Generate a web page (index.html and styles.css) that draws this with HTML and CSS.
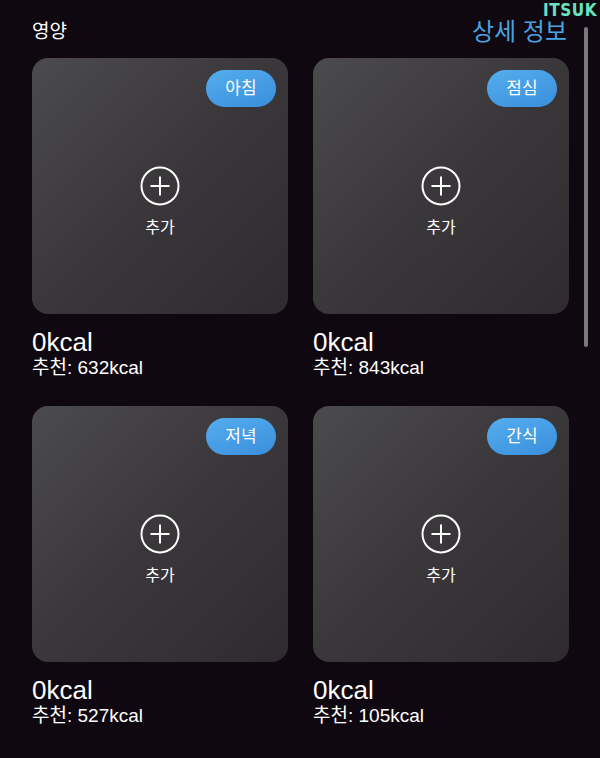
FILE: index.html
```html
<!DOCTYPE html>
<html>
<head>
<meta charset="utf-8">
<title>영양</title>
<link rel="stylesheet" href="styles.css">
</head>
<body>
	<div class="watermark">ITSUK</div>
	<div class="scrollbar"></div>
	<div class="page">
		<div class="header">
			<h2 class="title">영양</h2>
			<a class="detail">상세 정보</a>
		</div>
		<div class="meals">
			<div class="meal">
				<div class="card">
					<span class="pill">아침</span>
					<svg class="plus" width="40" height="40" viewBox="0 0 40 40">
						<circle cx="20" cy="20" r="18.5" fill="none" stroke="#fff" stroke-width="2"/>
						<path d="M20 10.5v19M10.5 20h19" stroke="#fff" stroke-width="2"/>
					</svg>
					<span class="add">추가</span>
				</div>
				<div class="kcal">0kcal</div>
				<div class="goal">추천: 632kcal</div>
			</div>
			<div class="meal">
				<div class="card">
					<span class="pill">점심</span>
					<svg class="plus" width="40" height="40" viewBox="0 0 40 40">
						<circle cx="20" cy="20" r="18.5" fill="none" stroke="#fff" stroke-width="2"/>
						<path d="M20 10.5v19M10.5 20h19" stroke="#fff" stroke-width="2"/>
					</svg>
					<span class="add">추가</span>
				</div>
				<div class="kcal">0kcal</div>
				<div class="goal">추천: 843kcal</div>
			</div>
			<div class="meal">
				<div class="card">
					<span class="pill">저녁</span>
					<svg class="plus" width="40" height="40" viewBox="0 0 40 40">
						<circle cx="20" cy="20" r="18.5" fill="none" stroke="#fff" stroke-width="2"/>
						<path d="M20 10.5v19M10.5 20h19" stroke="#fff" stroke-width="2"/>
					</svg>
					<span class="add">추가</span>
				</div>
				<div class="kcal">0kcal</div>
				<div class="goal">추천: 527kcal</div>
			</div>
			<div class="meal">
				<div class="card">
					<span class="pill">간식</span>
					<svg class="plus" width="40" height="40" viewBox="0 0 40 40">
						<circle cx="20" cy="20" r="18.5" fill="none" stroke="#fff" stroke-width="2"/>
						<path d="M20 10.5v19M10.5 20h19" stroke="#fff" stroke-width="2"/>
					</svg>
					<span class="add">추가</span>
				</div>
				<div class="kcal">0kcal</div>
				<div class="goal">추천: 105kcal</div>
			</div>
		</div>
	</div>
</body>
</html>
```
FILE: styles.css
```css
body {
	margin: 0;
	background: #100810;
	color: #fff;
	font-family: "Liberation Sans", "Noto Sans CJK KR", sans-serif;
}

.page {
	padding: 0 31px 0 32px;
}

.header {
	height: 58px;
	display: flex;
	align-items: center;
	justify-content: space-between;
}

.title {
	margin: 0;
	font-size: 19px;
	font-weight: normal;
}

.detail {
	margin-right: 2px;
	font-size: 24px;
	color: #48a3e2;
}

.meals {
	display: grid;
	grid-template-columns: 256px 256px;
	column-gap: 25px;
	row-gap: 27px;
}

.card {
	position: relative;
	height: 256px;
	border-radius: 16px;
	background: linear-gradient(135deg, #4b4a4c 0%, #3a373a 50%, #2f2a2f 100%);
	display: flex;
	flex-direction: column;
	align-items: center;
	padding-top: 108px;
	box-sizing: border-box;
}

.pill {
	position: absolute;
	top: 12px;
	right: 12px;
	width: 70px;
	height: 37px;
	line-height: 37px;
	border-radius: 19px;
	text-align: center;
	font-size: 17px;
	background: linear-gradient(160deg, #55aeee, #3a8edc);
}

.plus {
	display: block;
}

.add {
	margin-top: 12px;
	font-size: 16px;
	line-height: 20px;
}

.kcal {
	margin-top: 13px;
	font-size: 26px;
	line-height: 30px;
}

.goal {
	font-size: 19px;
	line-height: 22px;
}

.scrollbar {
	position: absolute;
	left: 584px;
	top: 27px;
	width: 4px;
	height: 320px;
	border-radius: 2px;
	background: #7a7a7a;
}

.watermark {
	position: absolute;
	top: 0;
	right: 3px;
	font-family: "DejaVu Sans", sans-serif;
	font-weight: bold;
	font-stretch: condensed;
	font-size: 17px;
	letter-spacing: 0.5px;
	color: #6ae2c2;
}
```
